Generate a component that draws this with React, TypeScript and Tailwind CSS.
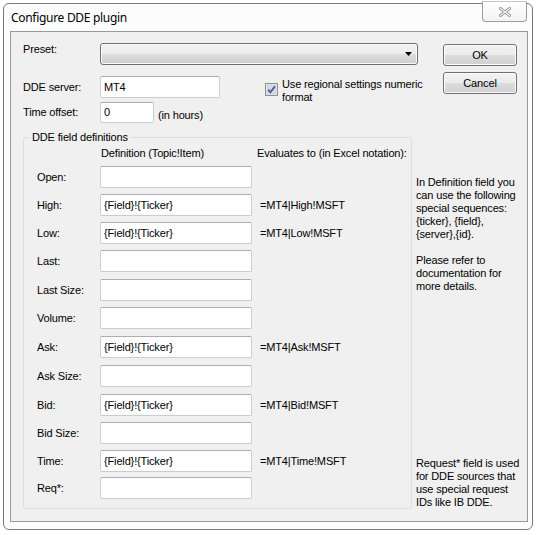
import React from "react";

type Row = { label: string; value: string; ev: string; mt: string };

const rows: Row[] = [
  { label: "Open:", value: "", ev: "", mt: "mt-[6px]" },
  { label: "High:", value: "{Field}!{Ticker}", ev: "=MT4|High!MSFT", mt: "mt-[6px]" },
  { label: "Low:", value: "{Field}!{Ticker}", ev: "=MT4|Low!MSFT", mt: "mt-[6px]" },
  { label: "Last:", value: "", ev: "", mt: "mt-[6px]" },
  { label: "Last Size:", value: "", ev: "", mt: "mt-[7px]" },
  { label: "Volume:", value: "", ev: "", mt: "mt-[6px]" },
  { label: "Ask:", value: "{Field}!{Ticker}", ev: "=MT4|Ask!MSFT", mt: "mt-[7px]" },
  { label: "Ask Size:", value: "", ev: "", mt: "mt-[7px]" },
  { label: "Bid:", value: "{Field}!{Ticker}", ev: "=MT4|Bid!MSFT", mt: "mt-[7px]" },
  { label: "Bid Size:", value: "", ev: "", mt: "mt-[6px]" },
  { label: "Time:", value: "{Field}!{Ticker}", ev: "=MT4|Time!MSFT", mt: "mt-[6px]" },
  { label: "Req*:", value: "", ev: "", mt: "mt-[5px]" },
];

const inputCls =
  "shrink-0 bg-white border border-[#c9ccd2] border-t-[#abadb3] rounded-[2px] pl-[3px] flex items-center text-black";

const btnCls =
  "w-[74px] h-[22px] border border-[#707070] rounded-[3px] flex items-center justify-center bg-[linear-gradient(to_bottom,#f2f2f2_0%,#ebebeb_50%,#dddddd_50%,#cfcfcf_100%)] shadow-[inset_0_0_0_1px_#fcfcfc]";

function CheckBox() {
  return (
    <svg width="13" height="13" viewBox="0 0 13 13" className="mt-[5px] shrink-0">
      <rect x="0.5" y="0.5" width="12" height="12" fill="#f4f4f4" stroke="#8e8f8f" />
      <rect x="2" y="2" width="9" height="9" fill="#d6dbe6" stroke="#b8bfcc" strokeWidth="0.6" />
      <path d="M3.2 6.6 L5.4 9.2 L9.9 3.4" fill="none" stroke="#4b5e92" strokeWidth="1.8" />
    </svg>
  );
}

function CloseGlyph() {
  return (
    <svg width="12" height="10" viewBox="0 0 12 10">
      <path d="M1.5 1.5 L10.5 8.5 M10.5 1.5 L1.5 8.5" stroke="#9a9a9a" strokeWidth="3" strokeLinecap="square" />
      <path d="M1.5 1.5 L10.5 8.5 M10.5 1.5 L1.5 8.5" stroke="#f4f4f4" strokeWidth="1.2" strokeLinecap="square" />
    </svg>
  );
}

export default function App() {
  return (
    <div
      className="w-[541px] h-[535px] bg-white pt-[3px] pl-[3px] overflow-hidden text-[11px] leading-[13px] tracking-[-0.15px] text-black"
      style={{ fontFamily: '"Liberation Sans", Arial, sans-serif' }}
    >
      <div className="w-[530px] h-[527px] border border-[#7b7b7b] rounded-[6px] bg-[#fcfcfc] flex flex-col">
        {/* title bar */}
        <div className="h-[27px] flex items-start shrink-0">
          <div
            className="pl-[7px] h-[27px] flex items-center text-[12px] tracking-[-0.3px] text-black"
            style={{ fontFamily: '"Noto Sans", "Open Sans", sans-serif' }}
          >
            Configure DDE plugin
          </div>
          <div className="ml-auto mr-[5px] -mt-[3px] w-[45px] h-[21px] relative border border-[#9c9c9c] border-t-[#c8c8c8] rounded-b-[4px] rounded-t-[1px] bg-[linear-gradient(to_bottom,#ffffff,#f3f3f3)] flex items-center justify-center">
            <CloseGlyph />
          </div>
        </div>

        {/* client area */}
        <div className="flex-1 ml-[6px] mr-[4px] mb-[7px] border border-[#9a9a9a] bg-[#f0f0f0] pt-[11px] pl-[12px] flex flex-col">
          {/* top section */}
          <div className="flex">
            <div className="w-[395px] shrink-0 flex flex-col">
              <div className="h-[22px] flex items-start">
                <div className="w-[77px] shrink-0">Preset:</div>
                <div className="w-[318px] shrink-0 h-[22px] border border-[#707070] rounded-[3px] bg-[linear-gradient(to_bottom,#f2f2f2_0%,#ebebeb_50%,#dddddd_50%,#cfcfcf_100%)] shadow-[inset_0_0_0_1px_#fafafa] flex items-center justify-end pr-[5px]">
                  <svg width="7" height="4" viewBox="0 0 7 4">
                    <polygon points="0,0 7,0 3.5,4" fill="#000" />
                  </svg>
                </div>
              </div>
              <div className="h-[22px] mt-[11px] flex items-center">
                <div className="w-[77px] shrink-0">DDE server:</div>
                <div className={inputCls + " w-[120px] h-[22px]"}>MT4</div>
                <div className="self-start shrink-0 ml-[45px] mt-[2px] flex items-start gap-[4px] whitespace-nowrap">
                  <CheckBox />
                  <div>
                    Use regional settings numeric
                    <br />
                    format
                  </div>
                </div>
              </div>
              <div className="h-[21px] mt-[4px] flex items-center">
                <div className="w-[77px] shrink-0">Time offset:</div>
                <div className={inputCls + " w-[54px] h-[21px]"}>0</div>
                <div className="ml-[4px] pt-[5px] shrink-0">(in hours)</div>
              </div>
            </div>
            <div className="ml-[25px] shrink-0 flex flex-col">
              <div className={btnCls + " mt-[1px]"}>OK</div>
              <div className={btnCls + " mt-[6px]"}>Cancel</div>
            </div>
          </div>

          {/* lower section */}
          <div className="flex mt-[8px]">
            <fieldset className="w-[389px] shrink-0 border border-[#d5dfe5] rounded-[3px]">
              <legend className="ml-[6px] px-[2px] leading-[13px]">DDE field definitions</legend>
              <div className="pl-[13px] pb-[9px]">
                <div className="flex mt-[3px]">
                  <div className="w-[63px] shrink-0" />
                  <div className="w-[152px] shrink-0 pl-[1px]">Definition (Topic!Item)</div>
                  <div className="ml-[5px] whitespace-nowrap">Evaluates to (in Excel notation):</div>
                </div>
                {rows.map((r) => (
                  <div key={r.label} className={"h-[22px] flex items-center " + r.mt}>
                    <div className="w-[63px] shrink-0">{r.label}</div>
                    <div className={inputCls + " w-[152px] h-[22px]"}>{r.value}</div>
                    <div className="ml-[8px] whitespace-nowrap">{r.ev}</div>
                  </div>
                ))}
              </div>
            </fieldset>
            <div className="ml-[4px] w-[110px] pt-[45px] flex flex-col justify-between">
              <div>
                <p>
                  In Definition field you can use the following special sequences: {"{ticker}"}, {"{field}"},
                  {" {server},{id}."}
                </p>
                <p className="mt-[13px]">Please refer to documentation for more details.</p>
              </div>
              <p>Request* field is used for DDE sources that use special request IDs like IB DDE.</p>
            </div>
          </div>
        </div>
      </div>
    </div>
  );
}
